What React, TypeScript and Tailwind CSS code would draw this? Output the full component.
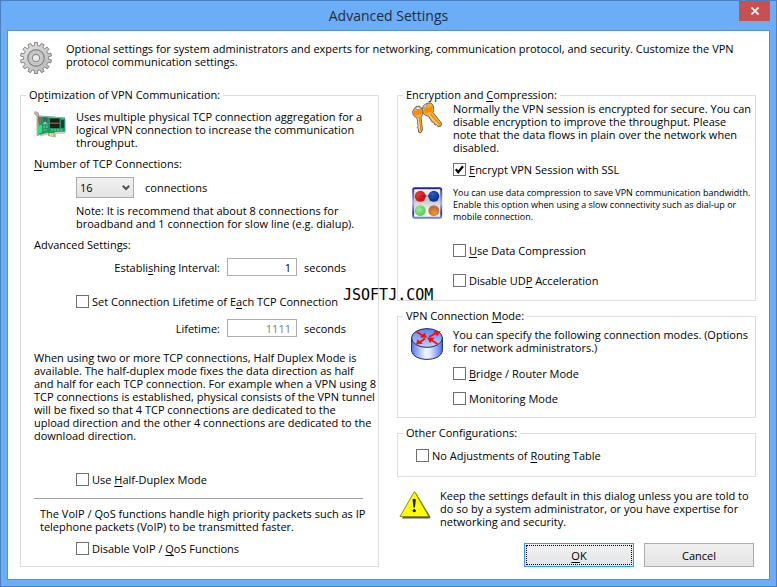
import React from 'react';

interface CheckFieldProps {
  id: string;
  children: React.ReactNode;
  defaultChecked?: boolean;
  className?: string;
}

const CheckField: React.FC<CheckFieldProps> = ({ id, children, defaultChecked = false, className = '' }) => (
  <div className={`flex items-center gap-[3px] ${className}`}>
    <span className="relative flex h-[13px] w-[13px] shrink-0">
      <input
        id={id}
        type="checkbox"
        defaultChecked={defaultChecked}
        className="peer h-[13px] w-[13px] appearance-none border border-[#707070] bg-white"
      />
      <svg
        viewBox="0 0 13 13"
        className="pointer-events-none absolute inset-0 hidden h-[13px] w-[13px] peer-checked:block"
        aria-hidden="true"
      >
        <path d="M2.8 6.2 L5.2 9.2 L10 3.2" fill="none" stroke="#000" strokeWidth="2.2" />
      </svg>
    </span>
    <label htmlFor={id} className="whitespace-nowrap">
      {children}
    </label>
  </div>
);

interface GroupProps {
  title: React.ReactNode;
  children: React.ReactNode;
  className?: string;
}

const Group: React.FC<GroupProps> = ({ title, children, className = '' }) => (
  <fieldset className={`min-w-0 border border-[#dcdcdc] px-[13px] ${className}`}>
    <legend className="-ml-2 h-[14px] px-[3px] leading-[14px] whitespace-nowrap">{title}</legend>
    {children}
  </fieldset>
);

// Underlined access key letter
const Key: React.FC<{ children: React.ReactNode }> = ({ children }) => (
  <span className="underline decoration-1 underline-offset-2">{children}</span>
);

const gearPoints = () => {
  const teeth = 14;
  const points: string[] = [];
  for (let i = 0; i < teeth; i++) {
    const center = (i * 2 * Math.PI) / teeth;
    [
      [-0.13, 12.6],
      [-0.1, 15.6],
      [0.1, 15.6],
      [0.13, 12.6],
    ].forEach(([offset, radius]) => {
      const a = center + offset;
      points.push(`${(16 + radius * Math.sin(a)).toFixed(2)},${(16 - radius * Math.cos(a)).toFixed(2)}`);
    });
  }
  return points.join(' ');
};

const GearIcon = () => (
  <svg viewBox="0 0 32 32" className="h-8 w-8 shrink-0" aria-hidden="true">
    <defs>
      <linearGradient id="gear" x1="0" y1="0" x2="1" y2="1">
        <stop offset="0" stopColor="#e6e6e6" />
        <stop offset="1" stopColor="#b4b4b4" />
      </linearGradient>
    </defs>
    <polygon points={gearPoints()} fill="url(#gear)" stroke="#7c7c7c" strokeWidth="0.9" />
    <circle cx="16" cy="16" r="8.2" fill="#d4d4d4" stroke="#8a8a8a" strokeWidth="1.4" />
    <circle cx="16" cy="16" r="6.2" fill="#cccccc" stroke="#bcbcbc" strokeWidth="1" />
    <circle cx="16" cy="16" r="3.6" fill="#ececec" stroke="#8a8a8a" strokeWidth="1.1" />
  </svg>
);

const NetworkCardIcon = () => (
  <svg viewBox="0 0 32 32" className="h-8 w-8 shrink-0" aria-hidden="true">
    <path d="M4 8 L32 9.5 V23.5 L22 24 V27.5 L15 26.5 V24.5 L6 26.5 Z" fill="#777" opacity="0.4" />
    <path d="M4 5.5 L31 7.5 V21.5 L20.5 22 V26.5 L14 25.5 V22.5 L5 25 Z" fill="#1f9765" />
    <path d="M5 6.3 L30.5 8.2" stroke="#74cda2" strokeWidth="1" />
    <path d="M1 1.5 L4.5 3 V25.5 L3 25.5 V6 L0.5 4 Z" fill="#c2b8ae" stroke="#8b8177" strokeWidth="0.6" />
    <path d="M4 7 H7.5 V12 H4 Z" fill="#8d6c58" />
    <path d="M4 16 L8 14.5 V22.5 L4 24 Z" fill="#2fe07a" />
    <rect x="9" y="7.5" width="4.5" height="4" fill="#5c5664" />
    <path d="M16 8.5 H25.5 V18 H16 Z" fill="#211f1c" />
    <path d="M16 13.2 H25.5" stroke="#98793e" strokeWidth="1.1" />
    <rect x="27" y="10" width="3" height="8" fill="#2b3c31" />
    <path d="M9 14 H13.5 M9 17 H14.5 M9.5 20 H13 M17 20 H29" stroke="#8bd5ad" strokeWidth="1.2" strokeDasharray="2 1" />
    <path d="M14.5 23 H20.5 V26.5 L14.5 25.5 Z" fill="#dcbc4a" />
    <path d="M16.3 23 V26 M18.6 23 V26" stroke="#f5e9a6" strokeWidth="0.8" />
    <circle cx="11" cy="12.8" r="0.9" fill="#d7ece0" />
  </svg>
);

const KeysIcon = () => (
  <svg viewBox="0 0 32 32" className="h-8 w-8 shrink-0" aria-hidden="true">
    <g stroke="#6a6a6a" strokeWidth="1" strokeLinejoin="round">
      <path d="M3 7 Q4.5 3.5 8 4 Q11 5 11.8 9 Q12.3 13 10 15.5 L11.5 28 L9.5 31 L7.5 30 L7.5 27 L6.3 25.5 L7.3 23.5 L6.3 21.5 L6.8 20 L6 16 Q1.5 14 1.5 9.5 Z" fill="#f5b04a" />
      <path d="M12 4.5 Q14 0.8 19 0.8 Q23 2 22.6 7.5 L22 10.5 L30.5 21 L30 24 L27 24.8 L25.8 22.5 L24 23 L22.8 20.5 L20.8 19.8 L17.5 14 Q13.5 14 12 11 Q10.7 7 12 4.5 Z" fill="#f7ae35" />
    </g>
    <path d="M2.5 9 L11 7.5 L10.3 12.5 L3.5 13.5 Z M13 7 L21.5 4 L21 9.5 L14 11.5 Z" fill="#ff8c00" />
    <path d="M8.2 15 L9.7 28 M19.5 12 L28.5 22.5" stroke="#f08a10" strokeWidth="1.4" />
    <path d="M7.2 16 L8.5 28 M18 12.8 L27 23" stroke="#ffe7a8" strokeWidth="0.9" />
    <ellipse cx="7" cy="6.2" rx="2.2" ry="1.4" fill="#fff" stroke="#777" strokeWidth="0.8" />
    <ellipse cx="14.3" cy="4" rx="1.6" ry="1.2" fill="#fff" stroke="#777" strokeWidth="0.8" />
  </svg>
);

const CompressionIcon = () => (
  <svg viewBox="0 0 32 32" className="h-8 w-8 shrink-0" aria-hidden="true">
    <defs>
      <linearGradient id="frame" x1="0" y1="0" x2="0" y2="1">
        <stop offset="0" stopColor="#23239a" />
        <stop offset="0.15" stopColor="#5460b0" />
        <stop offset="0.5" stopColor="#a8b4de" />
        <stop offset="0.85" stopColor="#3038a0" />
        <stop offset="1" stopColor="#7c86c8" />
      </linearGradient>
      <linearGradient id="plate" x1="0" y1="0" x2="0" y2="1">
        <stop offset="0" stopColor="#ffffff" />
        <stop offset="0.4" stopColor="#c4c4c8" />
        <stop offset="0.75" stopColor="#f6f6f8" />
        <stop offset="1" stopColor="#ffffff" />
      </linearGradient>
      <radialGradient id="ballRed" cx="0.35" cy="0.35">
        <stop offset="0" stopColor="#ff3434" />
        <stop offset="1" stopColor="#d5151c" />
      </radialGradient>
      <radialGradient id="ballBlue" cx="0.4" cy="0.35">
        <stop offset="0" stopColor="#2468d8" />
        <stop offset="1" stopColor="#10339c" />
      </radialGradient>
      <radialGradient id="ballGreen" cx="0.4" cy="0.4">
        <stop offset="0" stopColor="#92f592" />
        <stop offset="1" stopColor="#66cc66" />
      </radialGradient>
      <radialGradient id="ballOrange" cx="0.55" cy="0.7">
        <stop offset="0" stopColor="#ff9420" />
        <stop offset="1" stopColor="#bf7038" />
      </radialGradient>
    </defs>
    <rect x="2.2" y="1.2" width="28" height="29.6" rx="1.5" fill="url(#plate)" stroke="url(#frame)" strokeWidth="2" />
    <circle cx="9.3" cy="9.3" r="5.5" fill="url(#ballRed)" />
    <circle cx="22.8" cy="9.3" r="5.5" fill="url(#ballBlue)" />
    <circle cx="9.3" cy="23.7" r="5.5" fill="url(#ballGreen)" />
    <circle cx="22.8" cy="23.7" r="5.5" fill="url(#ballOrange)" />
    <path d="M8 9 H24" stroke="#333" strokeWidth="1.3" opacity="0.5" />
    <path d="M8 12 H13 M19 12 H24" stroke="#222" strokeWidth="1" opacity="0.25" />
  </svg>
);

const RouterIcon = () => (
  <svg viewBox="0 0 32 32" className="h-8 w-8 shrink-0" aria-hidden="true">
    <defs>
      <linearGradient id="drum" x1="0" y1="0" x2="1" y2="0">
        <stop offset="0" stopColor="#5077ee" />
        <stop offset="0.45" stopColor="#f2f5ff" />
        <stop offset="0.6" stopColor="#e2e9ff" />
        <stop offset="1" stopColor="#4a70ec" />
      </linearGradient>
      <linearGradient id="drumTop" x1="0" y1="0" x2="0" y2="1">
        <stop offset="0" stopColor="#5a82f4" />
        <stop offset="1" stopColor="#c4d3ff" />
      </linearGradient>
    </defs>
    <path d="M0.6 10 V22 C0.6 34.5 31.4 34.5 31.4 22 V10 Z" fill="url(#drum)" stroke="#222b4f" strokeWidth="1" />
    <ellipse cx="16" cy="10" rx="15.4" ry="9.4" fill="url(#drumTop)" stroke="#222b4f" strokeWidth="1" />
    <g stroke="#f01010" strokeWidth="2" fill="#f01010">
      <path d="M5.5 3.5 L12 8" />
      <path d="M18 9 L25 5" />
      <path d="M14 10.5 L8.5 14.5" />
      <path d="M26.5 16 L19.5 11.5" />
      <path d="M16 9.7 L9 9.5 L13.5 4.5 Z" stroke="none" />
      <path d="M29.5 3 L22 3.2 L26.5 8.3 Z" stroke="none" />
      <path d="M5 16.5 L6.5 11.3 L12 15.8 Z" stroke="none" />
      <path d="M16 9.5 L23.5 9.8 L19 15 Z" stroke="none" />
    </g>
  </svg>
);

const WarningIcon = () => (
  <svg viewBox="0 0 32 32" className="h-8 w-8 shrink-0" aria-hidden="true">
    <path d="M17 4 L31.5 28 L30.5 29.5 H3 Z" fill="#555" />
    <path d="M15.5 2.5 L29.8 27.5 H1 Z" fill="#ffff00" stroke="#8f8f00" strokeWidth="1" strokeLinejoin="round" />
    <path d="M13.6 10.5 Q15.2 8.8 16.8 10.5 L15.9 18.5 H14.5 Z" fill="#111" />
    <circle cx="15.2" cy="21.7" r="1.6" fill="#111" />
  </svg>
);

const App: React.FC = () => {
  return (
    <div className="relative flex min-h-screen flex-col border border-[#4b82bd] bg-[#6badf6] px-[6px] pb-[6px] font-['Open_Sans','Noto_Sans',sans-serif] text-[11px] leading-[13px] text-black">
      {/* Title bar */}
      <header className="flex h-[29px] items-start">
        <span className="w-[31px]" />
        <h1 className="flex-1 text-center text-[14px] leading-[30px] text-[#222d3d]">Advanced Settings</h1>
        <button type="button" aria-label="Close" className="flex h-5 w-[31px] items-center justify-center bg-[#c75050]">
          <svg viewBox="0 0 8 8" className="h-2 w-2" aria-hidden="true">
            <path d="M0.5 0.5 L7.5 7.5 M7.5 0.5 L0.5 7.5" stroke="#fff" strokeWidth="1.7" />
          </svg>
        </button>
      </header>

      <main className="flex flex-1 flex-col border border-[#5890d0] bg-white pt-[11px] pr-[13px] pb-3 pl-3">
        <div className="flex gap-[14px]">
          <GearIcon />
          <p>
            Optional settings for system administrators and experts for networking, communication protocol, and security. Customize the VPN
            <br />
            protocol communication settings.
          </p>
        </div>

        <form className="mt-[14px] grid flex-1 grid-cols-2 gap-[18px]" onSubmit={(e) => e.preventDefault()}>
          <Group
            title={
              <>
                Op<Key>t</Key>imization of VPN Communication:
              </>
            }
          >
            <div className="flex gap-[10px] pt-2">
              <NetworkCardIcon />
              <p className="whitespace-nowrap">
                Uses multiple physical TCP connection aggregation for a
                <br />
                logical VPN connection to increase the communication
                <br />
                throughput.
              </p>
            </div>

            <label htmlFor="connections" className="mt-2 block">
              <Key>N</Key>umber of TCP Connections:
            </label>
            <div className="mt-[7px] flex items-center gap-[11px] pl-[42px]">
              <span className="relative flex">
                <select
                  id="connections"
                  defaultValue="16"
                  className="h-[21px] w-[58px] appearance-none border border-[#acacac] bg-linear-to-b from-[#f0f0f0] to-[#e4e4e4] pl-[3px]"
                >
                  <option>1</option>
                  <option>8</option>
                  <option>16</option>
                  <option>32</option>
                </select>
                <svg viewBox="0 0 8 6" className="pointer-events-none absolute top-2 right-1 h-[6px] w-2" aria-hidden="true">
                  <path d="M0.8 0.8 L4 4 L7.2 0.8" fill="none" stroke="#505050" strokeWidth="2" />
                </svg>
              </span>
              <span>connections</span>
            </div>
            <p className="mt-[6px] pl-[42px] whitespace-nowrap">
              Note: It is recommend that about 8 connections for
              <br />
              broadband and 1 connection for slow line (e.g. dialup).
            </p>

            <h2 className="mt-2">Advanced Settings:</h2>
            <div className="mt-[7px] flex items-center gap-[7px]">
              <label htmlFor="interval" className="w-[186px] text-right">
                Establi<Key>s</Key>hing Interval:
              </label>
              <input
                id="interval"
                type="text"
                defaultValue="1"
                className="h-[18px] w-[70px] border border-[#abadb3] bg-white px-[5px] text-right"
              />
              <span>seconds</span>
            </div>
            <CheckField id="lifetimeOn" className="mt-[19px] pl-[42px]">
              Set Connection Lifetime of E<Key>a</Key>ch TCP Connection
            </CheckField>
            <div className="mt-[11px] flex items-center gap-[7px]">
              <label htmlFor="lifetime" className="w-[186px] text-right">
                Lifetime:
              </label>
              <input
                id="lifetime"
                type="text"
                defaultValue="1111"
                disabled
                className="h-[18px] w-[70px] border border-[#abadb3] bg-white px-[5px] text-right text-[#7d7d7d]"
              />
              <span>seconds</span>
            </div>

            <p className="mt-[14px] whitespace-nowrap">
              When using two or more TCP connections, Half Duplex Mode is
              <br />
              available. The half-duplex mode fixes the data direction as half
              <br />
              and half for each TCP connection. For example when a VPN using 8
              <br />
              TCP connections is established, physical consists of the VPN tunnel
              <br />
              will be fixed so that 4 TCP connections are dedicated to the
              <br />
              upload direction and the other 4 connections are dedicated to the
              <br />
              download direction.
            </p>
            <CheckField id="halfDuplex" className="mt-[31px] pl-[42px]">
              Use <Key>H</Key>alf-Duplex Mode
            </CheckField>

            <hr className="mt-3 mr-[2px] border-[#a0a0a0]" />
            <p className="mt-2 pl-[6px] whitespace-nowrap">
              The VoIP / QoS functions handle high priority packets such as IP
              <br />
              telephone packets (VoIP) to be transmitted faster.
            </p>
            <CheckField id="voip" className="mt-[9px] pl-[42px]">
              Disable VoIP / <Key>Q</Key>oS Functions
            </CheckField>
          </Group>

          <div className="flex min-w-0 flex-col">
            <Group
              className="pb-[13px]"
              title={
                <>
                  Encryption and <Key>C</Key>ompression:
                </>
              }
            >
              <div className="flex gap-[10px]">
                <KeysIcon />
                <p className="whitespace-nowrap">
                  Normally the VPN session is encrypted for secure. You can
                  <br />
                  disable encryption to improve the throughput. Please
                  <br />
                  note that the data flows in plain over the network when
                  <br />
                  disabled.
                </p>
              </div>
              <CheckField id="encrypt" defaultChecked className="mt-[9px] pl-[42px]">
                <Key>E</Key>ncrypt VPN Session with SSL
              </CheckField>
              <div className="mt-[11px] flex gap-[10px]">
                <CompressionIcon />
                <p className="text-[9px] leading-3 whitespace-nowrap">
                  You can use data compression to save VPN communication bandwidth.
                  <br />
                  Enable this option when using a slow connectivity such as dial-up or
                  <br />
                  mobile connection.
                </p>
              </div>
              <CheckField id="compress" className="mt-[21px] pl-[42px]">
                <Key>U</Key>se Data Compression
              </CheckField>
              <CheckField id="udp" className="mt-[17px] pl-[42px]">
                Disable UD<Key>P</Key> Acceleration
              </CheckField>
            </Group>

            <Group
              className="mt-2 pb-3"
              title={
                <>
                  VPN Connection <Key>M</Key>ode:
                </>
              }
            >
              <div className="flex gap-[10px] pt-[5px]">
                <RouterIcon />
                <p className="whitespace-nowrap">
                  You can specify the following connection modes. (Options
                  <br />
                  for network administrators.)
                </p>
              </div>
              <CheckField id="bridge" className="mt-[7px] pl-[42px]">
                <Key>B</Key>ridge / Router Mode
              </CheckField>
              <CheckField id="monitor" className="mt-3 pl-[42px]">
                Monitoring Mode
              </CheckField>
            </Group>

            <Group
              className="mt-2 pb-[14px]"
              title={
                <>
                  Other Confi<Key>g</Key>urations:
                </>
              }
            >
              <CheckField id="routing" className="mt-[9px] pl-[5px]">
                No Adjustments of <Key>R</Key>outing Table
              </CheckField>
            </Group>

            <div className="mt-3 flex gap-[9px] pl-[2px]">
              <WarningIcon />
              <p className="whitespace-nowrap">
                Keep the settings default in this dialog unless you are told to
                <br />
                do so by a system administrator, or you have expertise for
                <br />
                networking and security.
              </p>
            </div>

            <div className="mt-auto flex justify-end gap-[10px] pr-[2px]">
              <button
                type="submit"
                className="h-6 w-[110px] border border-[#3399ff] bg-linear-to-b from-[#f0f0f0] to-[#e3e5e8] p-px"
              >
                <span className="flex h-full items-center justify-center border border-dotted border-black">
                  <span>
                    <Key>O</Key>K
                  </span>
                </span>
              </button>
              <button
                type="button"
                className="h-6 w-[110px] border border-[#acacac] bg-linear-to-b from-[#f0f0f0] to-[#e5e5e5]"
              >
                Cancel
              </button>
            </div>
          </div>
        </form>
      </main>

      {/* Site mark lying over the dialog */}
      <span className="absolute top-[286px] left-[342px] font-['DejaVu_Sans_Mono',monospace] text-[15px] leading-4">
        JSOFTJ.COM
      </span>
    </div>
  );
};

export default App;
